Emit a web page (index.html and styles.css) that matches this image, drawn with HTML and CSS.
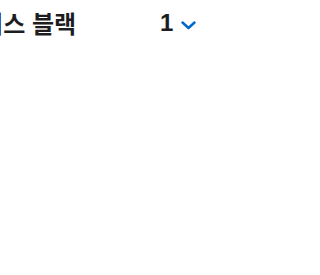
FILE: index.html
```html
<!DOCTYPE html>
<html lang="ko">
<head>
<meta charset="utf-8">
<link rel="stylesheet" href="styles.css">
</head>
<body>
<div class="row">
  <div class="name">스페이스 블랙</div>
  <div class="qty">
    <span class="num">1</span>
    <svg class="chev" width="15" height="9" viewBox="0 0 15 9"><path d="M1.5 1.5 L7.5 7 L13.5 1.5" fill="none" stroke="#0066cc" stroke-width="2.4" stroke-linecap="round" stroke-linejoin="round"/></svg>
  </div>
</div>
</body>
</html>
```
FILE: styles.css
```css
html, body {
  margin: 0;
  padding: 0;
  background: #fff;
  overflow: hidden;
}
.row {
  display: flex;
  align-items: center;
  padding-top: 8px;
  margin-left: -63px;
  font-family: "Noto Sans CJK KR", "Noto Sans", sans-serif;
  font-weight: 700;
  color: #1d1d1f;
}
.name {
  font-size: 24px;
  line-height: 30px;
  width: 223px;
  white-space: nowrap;
}
.qty {
  display: flex;
  align-items: center;
  gap: 8px;
}
.num {
  font-family: "Liberation Sans", "Noto Sans", sans-serif;
  font-size: 24px;
  line-height: 30px;
}
.chev {
  display: block;
  margin-top: 4px;
}
```
